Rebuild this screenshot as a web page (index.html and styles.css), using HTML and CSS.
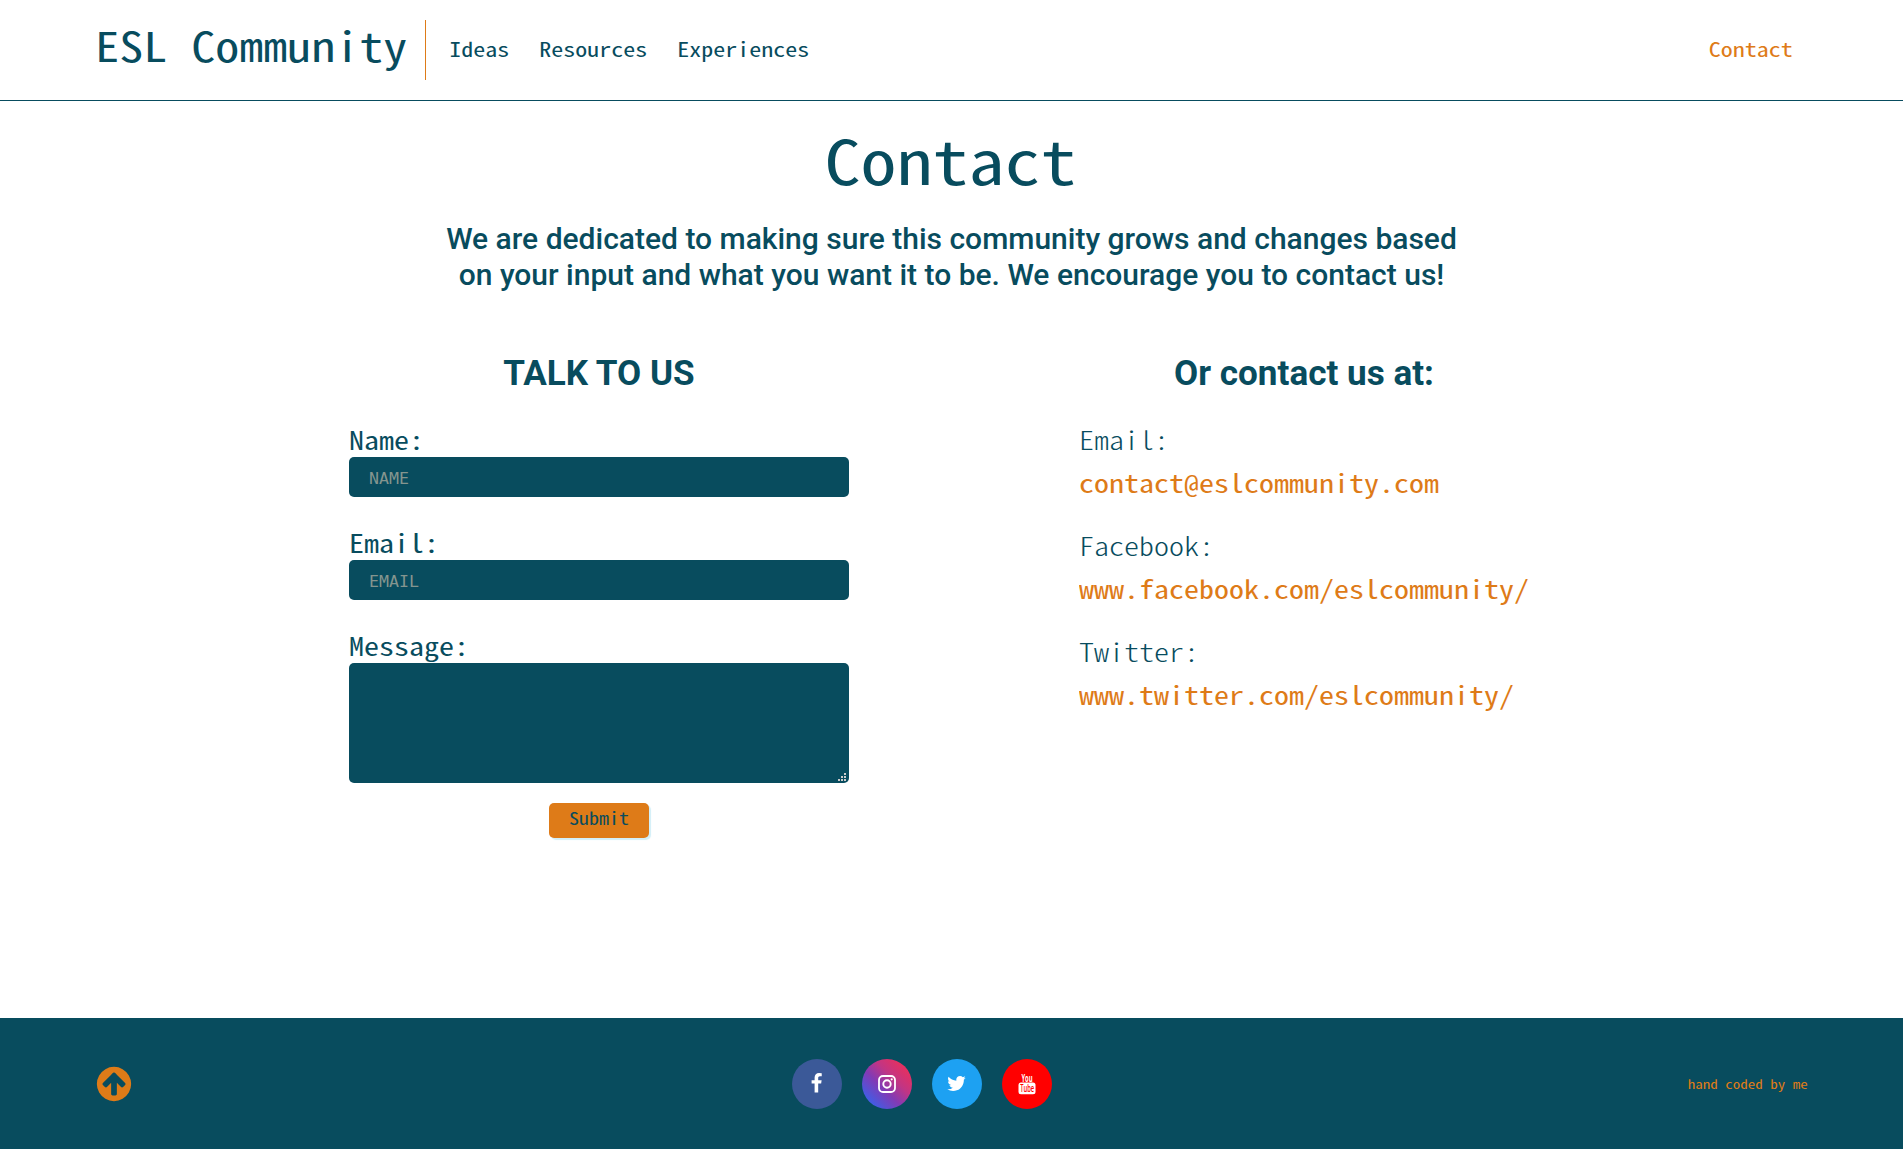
FILE: index.html
```html
<!DOCTYPE html>
<html lang="en">
<head>
<meta charset="utf-8">
<title>Contact | ESL Community</title>
<link rel="stylesheet" href="styles.css">
</head>
<body>
<header class="header">
  <a class="logo" href="#"><span class="mono">ESL Community</span></a>
  <nav class="nav">
    <a class="mono" href="#">Ideas</a>
    <a class="mono" href="#">Resources</a>
    <a class="mono" href="#">Experiences</a>
  </nav>
  <a class="nav-contact mono" href="#">Contact</a>
</header>
<main class="main">
  <h1 class="title mono">Contact</h1>
  <p class="intro">We are dedicated to making sure this community grows and changes based<br>on your input and what you want it to be. We encourage you to contact us!</p>
  <div class="columns">
    <form class="form">
      <h2 class="heading">TALK TO US</h2>
      <label class="label" for="name"><span class="mono">Name:</span></label>
      <input class="field" id="name" type="text" placeholder="NAME">
      <label class="label" for="email"><span class="mono">Email:</span></label>
      <input class="field" id="email" type="text" placeholder="EMAIL">
      <label class="label" for="message"><span class="mono">Message:</span></label>
      <div class="area-wrap">
        <textarea class="area" id="message"></textarea>
        <svg class="grip" viewBox="0 0 8 8" width="8" height="8" shape-rendering="crispEdges"><path fill="#ccc" d="M6 0h2v2h-2zM3 3h2v2h-2zM6 3h2v2h-2zM0 6h2v2h-2zM3 6h2v2h-2zM6 6h2v2h-2z"/></svg>
      </div>
      <button class="submit" type="button"><span class="mono">Submit</span></button>
    </form>
    <section class="details">
      <h2 class="heading">Or contact us at:</h2>
      <dl class="list">
        <dt class="mono">Email:</dt><dd class="mono"><a href="#">contact@eslcommunity.com</a></dd>
        <dt class="mono">Facebook:</dt><dd class="mono"><a href="#">www.facebook.com/eslcommunity/</a></dd>
        <dt class="mono">Twitter:</dt><dd class="mono"><a href="#">www.twitter.com/eslcommunity/</a></dd>
      </dl>
    </section>
  </div>
</main>
<footer class="footer">
  <a class="to-top" href="#" aria-label="Back to top"><svg viewBox="0 0 1792 1792" width="40" height="40"><path fill="currentColor" d="M1412 895q0-27-18-45l-362-362-91-91q-18-18-45-18t-45 18l-91 91-362 362q-18 18-18 45t18 45l91 91q18 18 45 18t45-18l189-189v502q0 26 19 45t45 19h128q26 0 45-19t19-45v-502l189 189q19 19 45 19t45-19l91-91q18-18 18-45zm252 1q0 209-103 385.500t-279.500 279.500-385.500 103-385.500-103-279.500-279.500-103-385.500 103-385.500 279.500-279.500 385.500-103 385.500 103 279.500 279.500 103 385.500z"/></svg></a>
  <div class="social">
    <a class="round facebook" href="#" aria-label="Facebook"><svg viewBox="0 0 1792 1792" width="21" height="21"><path fill="#fff" d="M1343 12v264h-157q-86 0-116 36t-30 108v189h293l-39 296h-254v759h-306v-759h-255v-296h255v-218q0-186 104-288.500t277-102.500q147 0 228 12z"/></svg></a>
    <a class="round instagram" href="#" aria-label="Instagram"><svg viewBox="0 0 18 18" width="18" height="18"><rect x="1" y="1" width="16" height="16" rx="4" fill="none" stroke="#fff" stroke-width="1.800"/><circle cx="9" cy="9" r="3.700" fill="none" stroke="#fff" stroke-width="1.900"/><circle cx="13.700" cy="4.300" r="1.100" fill="#fff"/></svg></a>
    <a class="round twitter" href="#" aria-label="Twitter"><svg viewBox="0 0 1792 1792" width="21" height="21"><path fill="#fff" d="M1684 408q-67 98-162 167 1 14 1 42 0 130-38 259.500t-115.500 248.500-184.500 210.500-258 146-323 54.500q-271 0-496-145 35 4 78 4 225 0 401-138-105-2-188-64.500t-114-159.500q33 5 61 5 43 0 85-11-112-23-185.500-111.500t-73.500-205.500v-4q68 38 146 41-66-44-105-115t-39-154q0-88 44-163 121 149 294.500 238.500t371.500 99.500q-8-38-8-74 0-134 94.500-228.500t228.500-94.500q140 0 236 102 109-21 205-78-37 115-142 178 93-10 186-50z"/></svg></a>
    <a class="round youtube" href="#" aria-label="YouTube"><svg class="yt" viewBox="0 0 18 22" width="18" height="22"><text x="3.500" y="8.800" font-size="11" textLength="11" lengthAdjust="spacingAndGlyphs" fill="#fff">You</text><rect x=".5" y="9.500" width="17" height="11.800" rx="2.500" fill="#fff"/><text class="tube" x="2.200" y="19.300" font-size="11" textLength="14" lengthAdjust="spacingAndGlyphs" fill="#f00">Tube</text></svg></a>
  </div>
  <p class="credit mono">hand coded by me</p>
</footer>
</body>
</html>
```
FILE: styles.css
```css
:root {
  --teal: #084c5e;
  --orange: #de7b18;
  --mono: "Noto Sans CJK SC", "DejaVu Sans Mono", monospace;
}
* { box-sizing: border-box; margin: 0; padding: 0; }
body {
  min-height: 1149px;
  display: flex;
  flex-direction: column;
  background: #fff;
  color: var(--teal);
  font-family: var(--mono);
  font-feature-settings: "hwid" 1;
}
a { color: inherit; text-decoration: none; }

/* half-width letters, flattened to a low cap height */
.mono { display: block; transform: scaleY(.85); }

.header {
  display: flex;
  align-items: center;
  height: 101px;
  padding: 0 5%;
  border-bottom: 1px solid var(--teal);
}
.logo {
  height: 60px;
  padding-right: 18px;
  border-right: 1px solid var(--orange);
  font-size: 48px;
  line-height: 48px;
}
.nav { display: flex; gap: 30px; margin: -4px 0 0 23px; font-size: 24px; line-height: 30px; }
.nav-contact { margin: -4px 0 0 auto; padding-right: 15px; font-size: 24px; line-height: 30px; color: var(--orange); }

.main { flex: 1; display: flex; flex-direction: column; align-items: center; }
.title { margin-top: 16px; padding-right: 2px; font-size: 72px; font-weight: 400; line-height: 84px; }
.intro { margin-top: 20px; font: 500 30px/36px Roboto, sans-serif; text-align: center; }
.columns { display: flex; gap: 230px; margin-top: 58px; padding-right: 25px; }
.heading { font: 700 35.1px/44px Roboto, sans-serif; text-align: center; }
.form { width: 500px; display: flex; flex-direction: column; }
.form .heading { margin-bottom: 29px; }
.label { height: 33px; font-size: 30px; line-height: 30px; }
.field, .area {
  display: block;
  width: 100%;
  border: 0;
  border-radius: 5px;
  background: var(--teal);
  color: #fff;
  font: 16.6px "DejaVu Sans Mono", monospace;
}
.field { height: 40px; margin-bottom: 30px; padding: 2px 20px 0; }
.field::placeholder { color: #84958f; }
.area-wrap { position: relative; }
.area { height: 120px; padding: 10px 20px; resize: none; }
.grip { position: absolute; right: 3px; bottom: 2px; }
.submit {
  align-self: center;
  width: 100px;
  height: 35px;
  margin-top: 20px;
  padding-bottom: 5px;
  border: 0;
  border-radius: 5px;
  background: var(--orange);
  box-shadow: 2px 2px 1px #d2eff8;
  color: var(--teal);
  font: 20px/30px var(--mono);
  font-feature-settings: "hwid" 1;
}
.details { width: 450px; }
.list { margin-top: 23px; font-size: 30px; line-height: 43px; }
.list dt { font-weight: 300; }
.list dd { margin-bottom: 20px; color: var(--orange); }

.footer {
  display: grid;
  grid-template-columns: 1fr auto 1fr;
  align-items: center;
  height: 131px;
  padding: 0 5%;
  background: var(--teal);
  color: var(--orange);
}
.to-top { margin-left: -1px; height: 40px; }
.social { display: flex; gap: 20px; margin-right: 60px; }
.round { width: 50px; height: 50px; border-radius: 50%; display: flex; align-items: center; justify-content: center; }
.facebook { background: #3b5998; }
.instagram { background: linear-gradient(45deg, #405de6 14%, #833ab4 42%, #c13584 62%, #f52e50 95%); }
.twitter { background: #1da1f2; }
.youtube { background: #f00; }
.yt { overflow: visible; font-family: "Open Sans", sans-serif; font-weight: 700; font-feature-settings: normal; }
.tube { font-weight: 600; }
.credit { text-align: right; font-size: 15px; line-height: 20px; }
```
